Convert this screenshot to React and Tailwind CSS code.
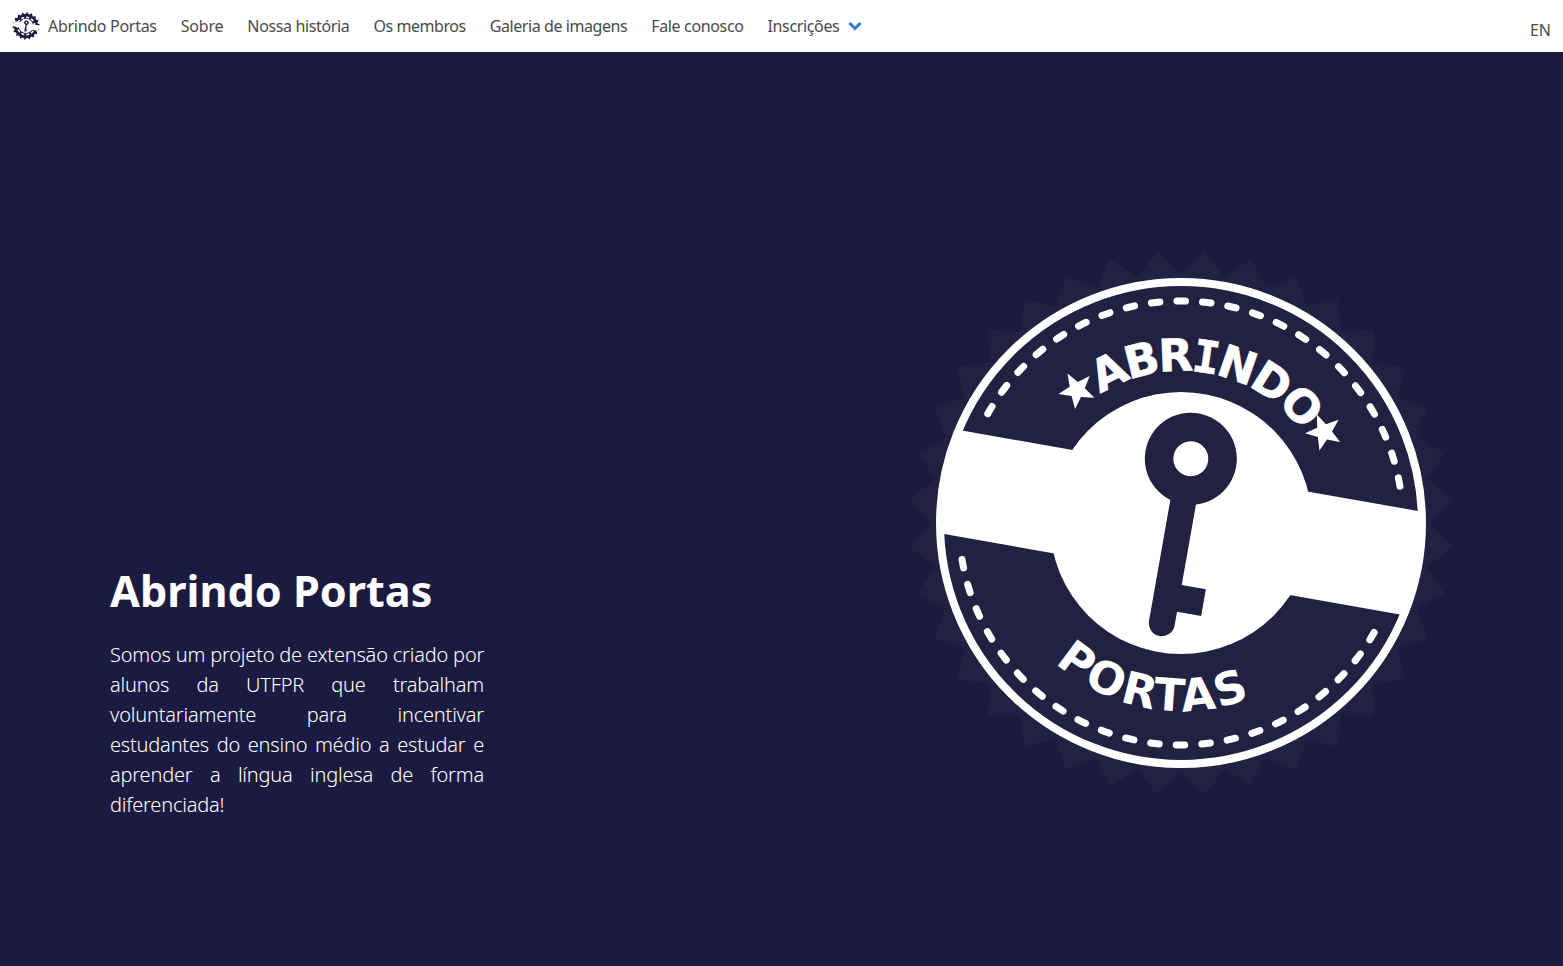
const navLinks = [
  { label: "Sobre", tracking: "tracking-[-0.2px]" },
  { label: "Nossa história", tracking: "tracking-[-0.36px]" },
  { label: "Os membros", tracking: "tracking-[-0.45px]" },
  { label: "Galeria de imagens", tracking: "tracking-[-0.42px]" },
  { label: "Fale conosco", tracking: "tracking-[-0.36px]" },
];

const introLines = [
  "Somos um projeto de extensão criado por",
  "alunos da UTFPR que trabalham",
  "voluntariamente para incentivar",
  "estudantes do ensino médio a estudar e",
  "aprender a língua inglesa de forma",
];

const BADGE_DARK = "#212142";

// serrated edge behind the badge
function burstPoints(cx, cy, outer, inner, count) {
  const pts = [];
  for (let i = 0; i < count * 2; i++) {
    const deg = 5 + i * (180 / count) - 90;
    const r = i % 2 === 0 ? outer : inner;
    const a = (deg * Math.PI) / 180;
    pts.push(`${(cx + r * Math.cos(a)).toFixed(1)},${(cy + r * Math.sin(a)).toFixed(1)}`);
  }
  return pts.join(" ");
}

function starPoints(cx, cy, outer, inner, rot) {
  const pts = [];
  for (let i = 0; i < 10; i++) {
    const r = i % 2 === 0 ? outer : inner;
    const a = ((rot + i * 36 - 90) * Math.PI) / 180;
    pts.push(`${(cx + r * Math.cos(a)).toFixed(1)},${(cy + r * Math.sin(a)).toFixed(1)}`);
  }
  return pts.join(" ");
}

function Key({ color }) {
  return (
    <g transform="rotate(10 273 273)">
      <circle cx="271.5" cy="208" r="46" fill={color} />
      <circle cx="271.5" cy="208" r="17.5" fill="#ffffff" />
      <path d="M258.5 245 H284.5 V334 H309 V361 H284.5 V375 A13 13 0 0 1 258.5 375 Z" fill={color} />
    </g>
  );
}

function Badge() {
  return (
    <svg width="546" height="546" viewBox="0 0 546 546" className="shrink-0">
      <defs>
        <path id="arc-top" d="M 121 273 A 152 152 0 0 1 425 273" />
        <path id="arc-bottom" d="M 85 273 A 188 188 0 0 0 461 273" />
        <clipPath id="inner-disc">
          <circle cx="273" cy="273" r="241" />
        </clipPath>
      </defs>
      <polygon points={burstPoints(273, 273, 273, 250, 36)} fill={BADGE_DARK} />
      <circle cx="273" cy="273" r="241" fill={BADGE_DARK} stroke="#ffffff" strokeWidth="8" />
      <g transform="rotate(10 273 273)" clipPath="url(#inner-disc)">
        <rect x="20" y="220" width="506" height="105" fill="#ffffff" />
      </g>
      <circle cx="273" cy="273" r="131" fill="#ffffff" />
      <Key color={BADGE_DARK} />
      <g transform="rotate(10 273 273)" fill="none" stroke="#ffffff" strokeWidth="7" strokeLinecap="round" strokeDasharray="8.5 17.1">
        <path d="M 63.7 199 A 222 222 0 0 1 482.3 199" />
        <path d="M 63.7 347 A 222 222 0 0 0 482.3 347" />
      </g>
      <g
        fill="#ffffff"
        fontWeight="700"
        style={{ fontFamily: '"DejaVu Sans", sans-serif' }}
        textAnchor="middle"
      >
        <g transform="rotate(10 273 273)">
          <text fontSize="45" letterSpacing="-3" stroke="#ffffff" strokeWidth="0.6">
            <textPath href="#arc-top" startOffset="50%">
              ABR<tspan style={{ fontFamily: '"DejaVu Sans Mono", monospace' }}>I</tspan>NDO
            </textPath>
          </text>
        </g>
        <g transform="rotate(10 273 273)">
          <text fontSize="45" letterSpacing="2">
            <textPath href="#arc-bottom" startOffset="50%">
              PORTAS
            </textPath>
          </text>
        </g>
      </g>
      <polygon points={starPoints(169, 140, 19, 8, -30)} fill="#ffffff" />
      <polygon points={starPoints(416, 182, 19, 8, 50)} fill="#ffffff" />
    </svg>
  );
}

function SmallLogo() {
  return (
    <svg width="28" height="28" viewBox="0 0 546 546" className="shrink-0">
      <polygon points={burstPoints(273, 273, 272, 225, 18)} fill="#1b1b41" />
      <circle cx="273" cy="273" r="225" fill="#1b1b41" />
      <circle cx="273" cy="273" r="170" fill="none" stroke="#ffffff" strokeWidth="30" strokeDasharray="60 40" />
      <g transform="rotate(10 273 273)">
        <rect x="20" y="220" width="506" height="105" fill="#ffffff" />
      </g>
      <circle cx="273" cy="273" r="140" fill="#ffffff" />
      <Key color="#1b1b41" />
    </svg>
  );
}

export default function App() {
  return (
    <div className="flex flex-col min-h-screen bg-[#1b1b41]" style={{ fontFamily: '"Noto Sans", sans-serif' }}>
      <nav className="h-[52px] bg-white flex items-center justify-between text-[#4a4a4a] text-base">
        <div className="flex items-center">
          <div className="flex items-center pl-3 pr-3 gap-2">
            <SmallLogo />
            <span className="tracking-[-0.29px]">Abrindo Portas</span>
          </div>
          {navLinks.map((link) => (
            <a key={link.label} className={`px-3 ${link.tracking}`}>{link.label}</a>
          ))}
          <a className="pl-3 flex items-center tracking-[-0.36px]">
            Inscrições
            <svg width="14" height="10" viewBox="0 0 14 10" className="ml-[9px]">
              <path d="M1.5 2 L7 7.5 L12.5 2" fill="none" stroke="#3273dc" strokeWidth="3" />
            </svg>
          </a>
        </div>
        <a className="pr-3 pt-2">EN</a>
      </nav>
      <main className="flex-1 flex justify-between pl-[110px] pr-[109px]">
        <div className="self-end pb-[146px] w-[374px] text-white">
          <h1 className="text-[43.2px] leading-[50px] font-bold mb-[24px]">Abrindo Portas</h1>
          <div className="text-[20px] leading-[30px] font-light tracking-[-0.2px]">
            {introLines.map((line) => (
              <p key={line} className="whitespace-nowrap text-justify [text-align-last:justify]">{line}</p>
            ))}
            <p>diferenciada!</p>
          </div>
        </div>
        <div className="mt-[198px]">
          <Badge />
        </div>
      </main>
    </div>
  );
}
